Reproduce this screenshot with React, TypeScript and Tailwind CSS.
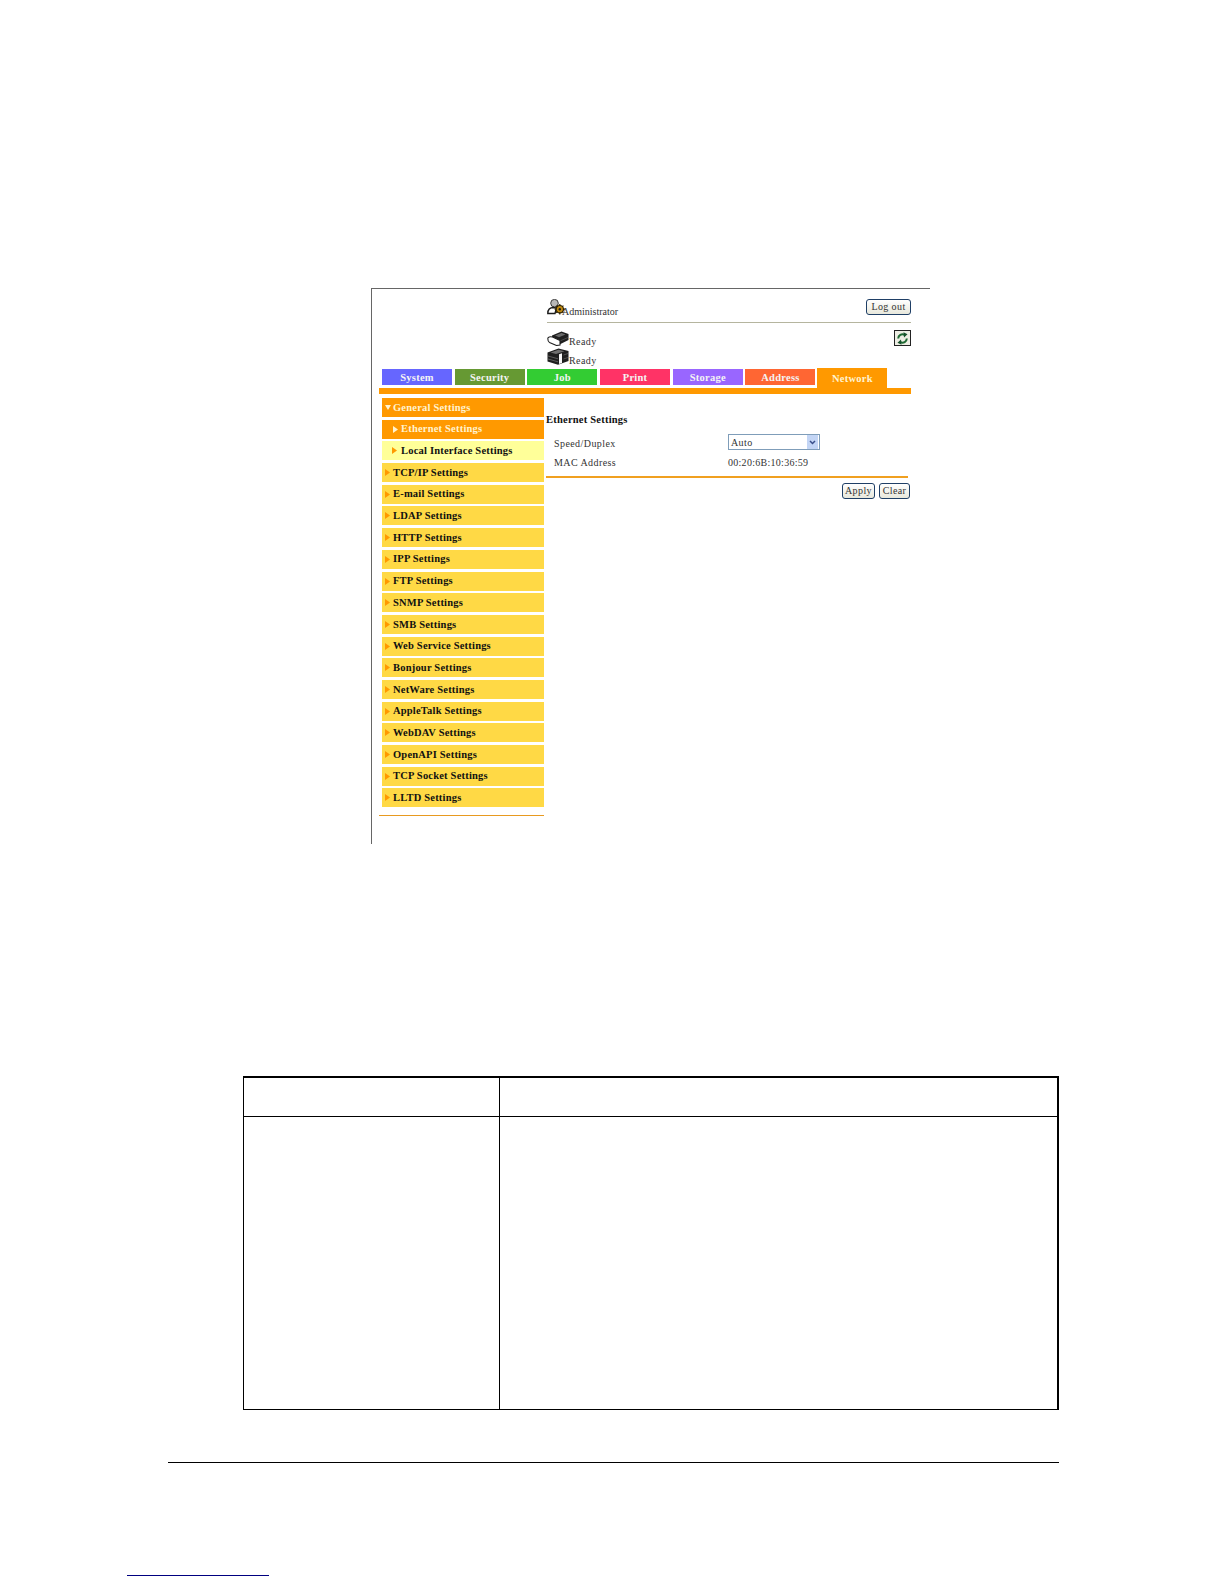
const TABS = [
  { label: "System", color: "bg-[#6666ff]" },
  { label: "Security", color: "bg-[#669933]" },
  { label: "Job", color: "bg-[#33cc33]" },
  { label: "Print", color: "bg-[#ff3366]" },
  { label: "Storage", color: "bg-[#9966ff]" },
  { label: "Address", color: "bg-[#ff6633]" },
];

const MENU = [
  "TCP/IP Settings",
  "E-mail Settings",
  "LDAP Settings",
  "HTTP Settings",
  "IPP Settings",
  "FTP Settings",
  "SNMP Settings",
  "SMB Settings",
  "Web Service Settings",
  "Bonjour Settings",
  "NetWare Settings",
  "AppleTalk Settings",
  "WebDAV Settings",
  "OpenAPI Settings",
  "TCP Socket Settings",
  "LLTD Settings",
];

function Arrow({ color }: { color: string }) {
  return (
    <svg width="5" height="7" viewBox="0 0 5 7" className="shrink-0">
      <path d="M0 0 L5 3.5 L0 7 Z" fill={color} />
    </svg>
  );
}

function AdminIcon() {
  return (
    <svg width="18" height="16" viewBox="0 0 18 16" className="shrink-0">
      <circle cx="7.5" cy="4.2" r="3.8" fill="#b8b8b8" stroke="#3a3a3a" strokeWidth="1" />
      <path d="M0.8 14.5 C0.8 10 3.5 8.5 6.5 8.5 L9.5 9 L8 14.5 Z" fill="#fff" stroke="#1c1c1c" strokeWidth="1.4" />
      <circle cx="12.8" cy="10.2" r="3.7" fill="#c08a10" stroke="#2e2200" strokeWidth="1.2" />
      <circle cx="12.8" cy="10.2" r="1.2" fill="#1c1c1c" />
      <path d="M12.8 5 V6.8 M12.8 13.6 V15.4 M7.6 10.2 H9.4 M16.2 10.2 H18 M9.2 6.6 L10.4 7.8 M15.2 12.6 L16.4 13.8 M16.4 6.6 L15.2 7.8 M10.4 12.6 L9.2 13.8" stroke="#2e2200" strokeWidth="1.2" />
    </svg>
  );
}

function PrinterIcon() {
  return (
    <svg width="22" height="15" viewBox="0 0 22 15" className="shrink-0">
      <path d="M5 4.5 L14.5 0.5 L21.5 3 L21.5 9 L12.5 13.5 L5 10 Z" fill="#1f1f1f" />
      <path d="M8 4.5 L14.5 2 L18.5 3.4 L12 6.2 Z" fill="#6a6a6a" />
      <path d="M6 7.5 L12.5 10.2 L21 6.5" fill="none" stroke="#555" strokeWidth="0.8" />
      <path d="M0.8 7.5 C0.8 6 3 5.5 5.5 6 L13 9.5 L13 14 L9.5 14.5 L2.5 11.5 C1.2 10.8 0.8 9.5 0.8 7.5 Z" fill="#fff" stroke="#1f1f1f" strokeWidth="1.1" />
    </svg>
  );
}

function CopierIcon() {
  return (
    <svg width="22" height="17" viewBox="0 0 22 17" className="shrink-0">
      <path d="M0.5 4.5 L11.5 0.5 L21.5 3 L21.5 13 L11 16.8 L0.5 13.5 Z" fill="#1f1f1f" />
      <path d="M3.5 4.5 L11.5 1.8 L17.5 3.2 L9 6 Z" fill="#707070" />
      <path d="M12 6.2 L15 5.2 L15 15 L12 16 Z" fill="#f7f7f7" />
      <path d="M1 8 L11 10.8 M1 11 L11 13.8" stroke="#6a6a6a" strokeWidth="0.8" />
      <path d="M16.5 7 L21 5.5 M16.5 11 L21 9.5" stroke="#5a5a5a" strokeWidth="0.8" />
    </svg>
  );
}

function RefreshIcon() {
  return (
    <div className="flex h-[16px] w-[17px] items-center justify-center border border-[#222] bg-[#eeeee4]">
      <svg width="13" height="13" viewBox="0 0 13 13">
        <path d="M2.2 6.5 A4.3 4.3 0 0 1 8.5 2.8" fill="none" stroke="#1f6a33" strokeWidth="2" />
        <path d="M7.5 0.3 L11.5 2.2 L8 5.6 Z" fill="#14502a" />
        <path d="M10.8 6.5 A4.3 4.3 0 0 1 4.5 10.2" fill="none" stroke="#1f6a33" strokeWidth="2" />
        <path d="M5.5 12.7 L1.5 10.8 L5 7.4 Z" fill="#14502a" />
      </svg>
    </div>
  );
}

function PageButton({ label, width }: { label: string; width: string }) {
  return (
    <button
      type="button"
      className={`flex h-[16px] items-center justify-center rounded-[3px] border border-[#1f3f66] bg-gradient-to-b from-white to-[#e8e8dc] text-[10px] leading-none tracking-[0.4px] text-[#333] ${width}`}
    >
      {label}
    </button>
  );
}

export default function App() {
  return (
    <div className="h-[1584px] w-[1224px] overflow-hidden bg-white pt-[288px] font-['Liberation_Serif',serif]">
      <div className="ml-[371px] h-[556px] w-[559px] border-l border-t border-[#666] pl-[7px]">
        <div className="ml-[168px] w-[364px]">
          <div className="flex h-[33px] items-end justify-between pb-[7px]">
            <div className="flex items-end">
              <AdminIcon />
              <span className="-mb-[2px] -ml-[3px] text-[10px] leading-[11px] tracking-[0px] text-[#333]">Administrator</span>
            </div>
            <PageButton label="Log out" width="w-[45px]" />
          </div>
          <div className="h-px bg-[#b5b59f]" />
          <div className="flex h-[45px] justify-between">
            <div className="flex flex-col gap-[2px] pt-[8px]">
              <div className="flex items-end">
                <PrinterIcon />
                <span className="text-[10px] leading-[9px] tracking-[0.4px] text-[#333]">Ready</span>
              </div>
              <div className="flex items-end">
                <CopierIcon />
                <span className="text-[10px] leading-[9px] tracking-[0.4px] text-[#333]">Ready</span>
              </div>
            </div>
            <div className="pt-[7px]">
              <RefreshIcon />
            </div>
          </div>
        </div>

        <div className="ml-[3px] flex h-[20px] gap-[2.7px]">
          {TABS.map((tab) => (
            <div
              key={tab.label}
              className={`mt-px flex h-[16px] w-[70px] items-center justify-center pt-[2px] text-[10.5px] font-bold tracking-[0.25px] text-[#f4f4f4] ${tab.color}`}
            >
              {tab.label}
            </div>
          ))}
          <div className="-ml-[0.7px] flex h-[20px] w-[70px] items-center justify-center bg-[#ff9900] pt-[2px] text-[10.5px] font-bold tracking-[0.25px] text-[#fff3d0]">
            Network
          </div>
        </div>
        <div className="h-[6px] w-[532px] bg-[#ff9900]" />

        <div className="mt-[4px] flex">
          <div className="w-[165px]">
            <div className="ml-[3px] flex flex-col gap-[2.7px]">
              <div className="flex h-[19px] items-center gap-[2px] bg-[#ff9900] pl-[3px] text-[10.5px] font-bold tracking-[0.2px] text-[#fff3d0]">
                <svg width="6" height="5" viewBox="0 0 6 5" className="shrink-0">
                  <path d="M0 0 H6 L3 5 Z" fill="#fff3d0" />
                </svg>
                <span>General Settings</span>
              </div>
              <div className="flex h-[19px] items-center gap-[3px] bg-[#ff9900] pl-[11px] text-[10.5px] font-bold tracking-[0.2px] text-[#fff3d0]">
                <Arrow color="#fff3d0" />
                <span>Ethernet Settings</span>
              </div>
              <div className="flex h-[19px] items-center gap-[4px] bg-[#ffff99] pl-[10px] text-[10.5px] font-bold tracking-[0.2px] text-[#111]">
                <Arrow color="#ff9900" />
                <span>Local Interface Settings</span>
              </div>
              {MENU.map((label) => (
                <div
                  key={label}
                  className="flex h-[19px] items-center gap-[3px] bg-[#ffd945] pl-[3px] text-[10.5px] font-bold tracking-[0.2px] text-[#111]"
                >
                  <Arrow color="#ff9900" />
                  <span>{label}</span>
                </div>
              ))}
            </div>
            <div className="mt-[8px] h-px bg-[#e89a20]" />
          </div>

          <div className="ml-[2px] w-[365px]">
            <div className="mt-[16px] text-[10.5px] font-bold leading-[12px] tracking-[0.22px] text-[#111]">
              Ethernet Settings
            </div>
            <div className="mt-[8px] flex h-[16px] items-center pl-[8px] text-[10px] tracking-[0.42px] text-[#333]">
              <span className="w-[174px] pt-[2px]">Speed/Duplex</span>
              <div className="flex h-[16px] w-[92px] items-center justify-between border border-[#7f9db9] bg-white pl-[2px] pr-px">
                <span className="tracking-[0.4px]">Auto</span>
                <div className="flex h-[14px] w-[11px] items-center justify-center bg-[#c3d5f5]">
                  <svg width="7" height="5" viewBox="0 0 7 5">
                    <path d="M1 1 L3.5 3.5 L6 1" fill="none" stroke="#3a4f8a" strokeWidth="1.5" />
                  </svg>
                </div>
              </div>
            </div>
            <div className="mt-[5px] flex h-[14px] items-center pl-[8px] text-[10px] tracking-[0.42px] text-[#333]">
              <span className="w-[174px]">MAC Address</span>
              <span className="tracking-[0.28px]">00:20:6B:10:36:59</span>
            </div>
            <div className="mt-[7px] h-[2px] w-[362px] bg-[#f0a020]" />
            <div className="mt-[5px] flex justify-end gap-[4px] pr-px">
              <PageButton label="Apply" width="w-[33px]" />
              <PageButton label="Clear" width="w-[31px]" />
            </div>
          </div>
        </div>
      </div>

      <div className="ml-[243px] mt-[232px] h-[334px] w-[816px] border-b border-l border-r-2 border-t-2 border-black">
        <div className="flex h-[39px] border-b border-black">
          <div className="w-[256px] border-r border-black" />
        </div>
        <div className="flex h-[292px]">
          <div className="w-[256px] border-r border-black" />
        </div>
      </div>

      <div className="ml-[168px] mt-[52px] h-px w-[891px] bg-black" />
      <div className="ml-[127px] mt-[112px] h-px w-[142px] bg-[#000080]" />
    </div>
  );
}
